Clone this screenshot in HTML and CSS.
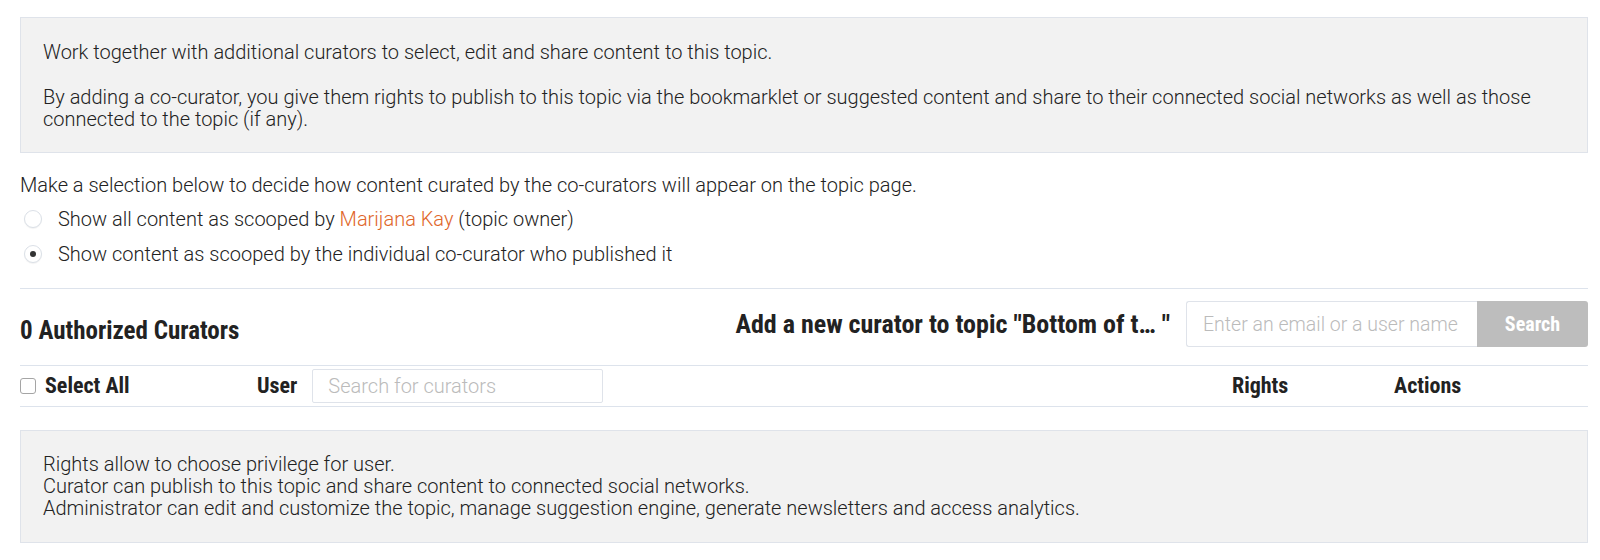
FILE: index.html
```html
<!DOCTYPE html>
<html lang="en">
<head>
<meta charset="utf-8">
<title>Co-curators</title>
<link rel="stylesheet" href="styles.css">
</head>
<body>
<div class="page">
  <div class="info-box intro">
    <p>Work together with additional curators to select, edit and share content to this topic.</p>
    <p>By adding a co-curator, you give them rights to publish to this topic via the bookmarklet or suggested content and share to their connected social networks as well as those connected to the topic (if any).</p>
  </div>

  <div class="selection">
    <div class="selection-title">Make a selection below to decide how content curated by the co-curators will appear on the topic page.</div>
    <div class="radio-list">
      <label class="radio-row"><span class="radio"></span><span>Show all content as scooped by <a class="owner" href="#">Marijana Kay</a> (topic owner)</span></label>
      <label class="radio-row"><span class="radio checked"></span><span>Show content as scooped by the individual co-curator who published it</span></label>
    </div>
  </div>

  <div class="curators-head">
    <h2 class="cond heading">0 Authorized Curators</h2>
    <div class="add-curator">
      <span class="cond add-label">Add a new curator to topic "Bottom of t… "</span>
      <div class="add-form">
        <input class="email-input" type="text" placeholder="Enter an email or a user name">
        <button class="cond search-btn">Search</button>
      </div>
    </div>
  </div>

  <div class="table-head">
    <div class="col-select"><span class="checkbox"></span><span class="cond th">Select All</span></div>
    <div class="col-user"><span class="cond th">User</span><input class="user-input" type="text" placeholder="Search for curators"></div>
    <div class="cond th">Rights</div>
    <div class="cond th">Actions</div>
  </div>

  <div class="info-box rights">
    <div>Rights allow to choose privilege for user.</div>
    <div>Curator can publish to this topic and share content to connected social networks.</div>
    <div>Administrator can edit and customize the topic, manage suggestion engine, generate newsletters and access analytics.</div>
  </div>
</div>
</body>
</html>
```

FILE: styles.css
```css
html, body {
  margin: 0;
  padding: 0;
  background: #fff;
}
body {
  font-family: Roboto, "Liberation Sans", sans-serif;
  font-weight: 300;
  font-size: 20px;
  line-height: 22px;
  color: #222;
}
.page {
  padding: 17px 12px 0 20px;
}
.cond {
  font-family: "Roboto Condensed", "Liberation Sans Narrow", "DejaVu Sans Condensed", Roboto, sans-serif;
  font-weight: 700;
  color: #222;
}
.info-box {
  background: #f2f2f2;
  border: 1px solid #dfe3ea;
}
.intro {
  padding: 23px 22px 22px;
}
.intro p {
  margin: 0;
}
.intro p + p {
  margin-top: 23px;
}
.selection {
  margin-top: 21px;
  padding-bottom: 17px;
  border-bottom: 1px solid #dde3ec;
}
.radio-list {
  margin-top: 5px;
}
.radio-row {
  display: flex;
  align-items: center;
  height: 35px;
  padding-left: 4px;
}
.radio {
  width: 16px;
  height: 16px;
  border: 1px solid #dbe0e7;
  border-radius: 50%;
  background: #fff;
  margin-right: 16px;
  display: flex;
  align-items: center;
  justify-content: center;
  box-shadow: 0 1px 1px rgba(0,0,0,0.05);
}
.radio.checked::after {
  content: "";
  width: 6px;
  height: 6px;
  border-radius: 50%;
  background: #333;
}
.owner {
  color: #e0662a;
  text-decoration: none;
}
.curators-head {
  display: flex;
  justify-content: space-between;
  align-items: center;
  padding: 12px 0 18px;
  border-bottom: 1px solid #dde3ec;
}
.heading {
  margin: 14px 0 0;
  font-size: 25px;
  line-height: 28px;
}
.add-curator {
  display: flex;
  align-items: center;
  gap: 16px;
}
.add-label {
  font-size: 26px;
  line-height: 28px;
}
.add-form {
  display: flex;
}
.email-input {
  width: 291px;
  height: 46px;
  box-sizing: border-box;
  border: 1px solid #dfe3ea;
  border-right: none;
  border-radius: 3px 0 0 3px;
  padding: 0 10px 0 16px;
  font-family: Roboto, sans-serif;
  font-weight: 300;
  font-size: 19.5px;
  color: #222;
  outline: none;
}
.email-input::placeholder,
.user-input::placeholder {
  color: #bbb;
}
.search-btn {
  width: 111px;
  height: 46px;
  border: none;
  border-radius: 0 3px 3px 0;
  background: #bdbdbd;
  color: #fff;
  font-size: 20px;
  padding: 0;
}
.table-head {
  display: grid;
  grid-template-columns: 237px 1fr 162px 194px;
  align-items: center;
  height: 40px;
  border-bottom: 1px solid #dde3ec;
}
.th {
  font-size: 22px;
  line-height: 24px;
}
.col-select {
  display: flex;
  align-items: center;
}
.checkbox {
  width: 14px;
  height: 14px;
  border: 1px solid #a5a5a5;
  border-radius: 3px;
  background: #fff;
  margin-right: 9px;
}
.col-user {
  display: flex;
  align-items: center;
  gap: 15px;
}
.user-input {
  width: 291px;
  height: 34px;
  box-sizing: border-box;
  border: 1px solid #dfe3ea;
  border-radius: 2px;
  padding: 0 15px;
  font-family: Roboto, sans-serif;
  font-weight: 300;
  font-size: 20px;
  color: #222;
  outline: none;
}
.rights {
  margin-top: 23px;
  padding: 22px 22px 23px;
}
```
